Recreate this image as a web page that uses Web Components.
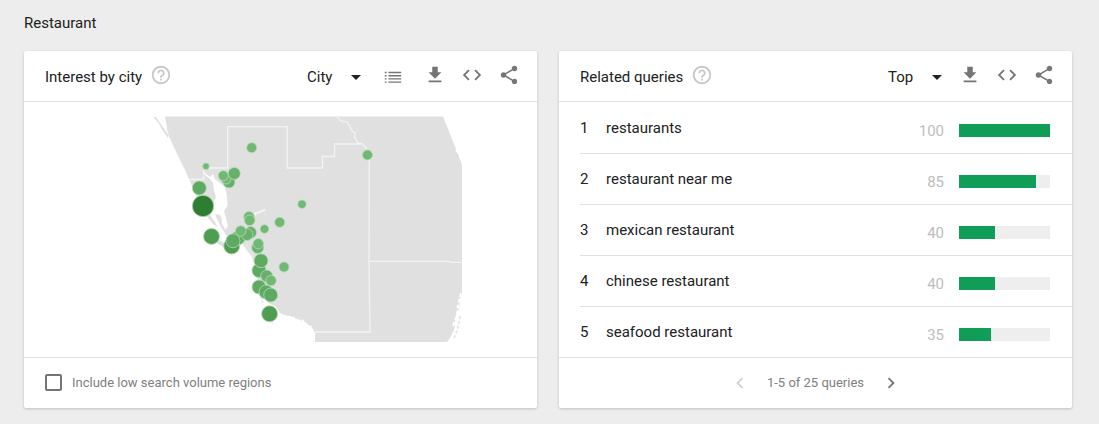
<!DOCTYPE html>
<html lang="en">
<head>
<meta charset="utf-8">
<meta name="viewport" content="width=device-width, initial-scale=1">
<title>Restaurant - Trends</title>
<style>
  body { margin: 0; background: #ededed; color: #212121; font: 15px/20px Roboto, "Liberation Sans", sans-serif; }
</style>
</head>
<body>
<trends-page></trends-page>

<template id="trends-page">
  <style>
    :host { display: block; padding: 13px 27px 16px 24px; }
    h1 { margin: 0 0 18px; font-size: 15px; line-height: 20px; font-weight: 400; }
    main { display: grid; grid-template-columns: 1fr 1fr; gap: 22px; }
    .check { display: flex; align-items: center; gap: 10px; padding: 0 0 1px 21px; }
    .check input { appearance: none; box-sizing: border-box; width: 17px; height: 17px; margin: 0; border: 2px solid #757575; border-radius: 2px; }
    .check input:checked { background: #757575; }
    .check label { color: #808080; font-size: 13px; }
    nav { display: flex; flex: 1; align-items: center; justify-content: center; gap: 16px; color: #808080; font-size: 13px; }
  </style>
  <h1>Restaurant</h1>
  <main>
    <trend-card heading="Interest by city">
      <drop-down slot="actions" label="Resolution" options="City,Metro"></drop-down>
      <icon-button slot="actions" icon="list" label="List view"></icon-button>
      <icon-button slot="actions" icon="download" label="Download"></icon-button>
      <icon-button slot="actions" icon="embed" label="Embed"></icon-button>
      <icon-button slot="actions" icon="share" label="Share"></icon-button>
      <city-map></city-map>
      <div slot="footer" class="check"><input type="checkbox" id="low"><label for="low">Include low search volume regions</label></div>
    </trend-card>
    <trend-card heading="Related queries">
      <drop-down slot="actions" label="Sort" options="Top,Rising"></drop-down>
      <icon-button slot="actions" icon="download" label="Download"></icon-button>
      <icon-button slot="actions" icon="embed" label="Embed"></icon-button>
      <icon-button slot="actions" icon="share" label="Share"></icon-button>
      <query-table></query-table>
      <nav slot="footer" aria-label="Pages">
        <icon-button icon="prev" label="Previous" disabled></icon-button>
        <span>1-5 of 25 queries</span>
        <icon-button icon="next" label="Next"></icon-button>
      </nav>
    </trend-card>
  </main>
</template>

<template id="trend-card">
  <style>
    :host { display: flex; flex-direction: column; min-width: 0; background: #fff; border-radius: 2px; box-shadow: 0 1px 3px rgba(0,0,0,.2); }
    header { display: flex; align-items: center; height: 48px; padding: 0 17px 2px 21px; border-bottom: 1px solid #e0e0e0; }
    h2 { margin: 4px 8px 0 0; font-size: 15px; line-height: 20px; font-weight: 400; }
    .actions { display: flex; align-items: center; gap: 15px; margin-left: auto; }
    .body { flex: 1; }
    footer { display: flex; height: 50px; border-top: 1px solid #e0e0e0; }
    ::slotted([slot=footer]) { flex: 1; }
  </style>
  <header><h2></h2><icon-button icon="help" label="Help"></icon-button><div class="actions"><slot name="actions"></slot></div></header>
  <div class="body"><slot></slot></div>
  <footer><slot name="footer"></slot></footer>
</template>

<template id="drop-down">
  <style>
    :host { display: grid; align-items: center; width: 54px; margin: 4px 2px 0 0; }
    select, svg { grid-area: 1 / 1; }
    select { appearance: none; width: 100%; margin: 0; padding: 0; border: 0; background: none; color: inherit; font: inherit; }
    svg { justify-self: end; width: 10px; height: 5px; pointer-events: none; }
  </style>
  <select></select>
  <svg viewBox="0 0 10 5" aria-hidden="true"><path d="M0 0h10L5 5z" fill="#212121"/></svg>
</template>

<template id="city-map">
  <style>
    :host { display: block; }
    svg { display: block; width: 100%; height: 255px; }
    .land { fill: #e0e0e0; }
    .water { fill: #fff; }
    .border { fill: none; stroke: #f3f3f3; stroke-width: 1.3; }
    circle { stroke: #b4dab5; stroke-width: .8; }
  </style>
  <svg viewBox="24 102 513 255" role="img" aria-label="Interest by city map">
    <path class="land" d="M165 116.5H443L456 149L455.500 151L458 154L462 165V293L460 299L459 308L456 316L454 330L450 338L447 342H315V333L311 327L305 322L297 319L289 316L281 314L275 306L268 303L262 294L258 281L255 267L252 257L246 249L242 243L233 248L225 248L215 242L219 240L226 244L225 236L219 228L213 224L208 218L204 211L199 202L194 191L189 179L184 168L179 158L171 141L168 134Z"/>
    <path class="land" d="M153.500 117L156 117L160 123L165 128L169 134L168 138L163 131L159 124Z"/>
    <path class="water" d="M164 117L166 123L167 131L170 136L166 132L161 124L157 117Z"/>
    <path class="water" d="M203 170L206 174L210 177L213 174L215 179L220 183L225 187L227 196L227.500 206L224 211L226 218L228 226L225 230L222 224L221 219L219 223L224 232L229 239L226 242L220 232L215 222L209 213L207 207L212 204L216 198L214 190L213 183L210 179L205 175Z"/>
    <path class="land" d="M215 214L220 215L222 219L221 223L225 229L222 229L218 221Z"/>
    <path class="border" d="M189 179.500H203.500V170M208 168H227.700V126.700H287.300V168H322.500V156.500H334.500V144H361M337 117L341 121L347 122L350 126L351 130L355 133L355 138L358 143L362 143.500L367 149M369.300 158L369 262L370 332H315M369 261.300H449L450 262.300H462"/>
    <path d="M250 218L256 213L260 212L265 209.500" fill="none" stroke="#fafafa" stroke-width="1.700"/>
    <path d="M280 314L287 318L292 317L297 321L303 321L306 326L311 327L313 332" fill="none" stroke="#fff" stroke-width="2.500" stroke-dasharray="2 1.500"/>
    <path d="M461 293L458 305L457 315L453 326" fill="none" stroke="#fff" stroke-width="2" stroke-dasharray="4 2"/>
    <path d="M454 338L457 331L459 322L460 316" fill="none" stroke="#e6e6e6" stroke-width="2" stroke-dasharray="3 2"/>
    <path d="M259 293L263 303M270 320L273 324M246 244L253 257" fill="none" stroke="#e6e6e6" stroke-width="1.500" stroke-dasharray="3 1"/>
    <g id="cities"></g>
  </svg>
</template>

<template id="query-table">
  <style>
    :host { display: block; }
    .wrap { padding: 1px 0 0 21px; }
    table { width: 100%; border-collapse: separate; border-spacing: 0; table-layout: fixed; }
    td { height: 50px; padding: 0; border-bottom: 1px solid #e0e0e0; }
    tr:last-child td { border-bottom: 0; }
    .rank { width: 26px; }
    .value { width: 60px; padding: 6px 15px 0 0; height: 44px; text-align: right; color: #bdbdbd; }
    .bar { width: 91px; padding: 5px 22px 0 0; height: 45px; }
    .track { height: 13px; background: #eee; }
    .fill { height: 100%; background: #0f9d58; }
  </style>
  <div class="wrap"><table aria-label="Related queries"><tbody></tbody></table></div>
</template>

<script>
class Base extends HTMLElement {
  constructor() {
    super();
    this.attachShadow({ mode: "open" });
    const t = document.getElementById(this.localName);
    if (t) this.shadowRoot.append(t.content.cloneNode(true));
  }
}

const ICONS = {
  help: '<path d="M11 18h2v-2h-2v2zm1-16C6.480 2 2 6.480 2 12s4.480 10 10 10 10-4.480 10-10S17.520 2 12 2zm0 18c-4.410 0-8-3.590-8-8s3.590-8 8-8 8 3.590 8 8-3.590 8-8 8zm0-14c-2.210 0-4 1.790-4 4h2c0-1.100.9-2 2-2s2 .9 2 2c0 2-3 1.750-3 5h2c0-2.250 3-2.500 3-5 0-2.210-1.790-4-4-4z"/>',
  list: '<path d="M3 8.500h2v1.500H3zM3 12h2v1.500H3zM3 15.500h2v1.500H3zM3 19h2v1.500H3zM7 8.500h14v1.500H7zM7 12h14v1.500H7zM7 15.500h14v1.500H7zM7 19h14v1.500H7z"/>',
  download: '<path d="M19 9h-4V3H9v6H5l7 7 7-7zM5 18v2h14v-2H5z"/>',
  embed: '<path d="M9.400 16.600L4.800 12l4.600-4.600L8 6l-6 6 6 6 1.400-1.400zm5.200 0l4.600-4.600-4.600-4.600L16 6l6 6-6 6-1.400-1.400z"/>',
  share: '<path d="M18 16.080c-.76 0-1.440.3-1.960.77L8.910 12.700c.05-.23.09-.46.09-.7s-.04-.47-.09-.7l7.050-4.110c.54.5 1.250.81 2.040.81 1.660 0 3-1.340 3-3s-1.340-3-3-3-3 1.340-3 3c0 .24.04.47.09.7L8.040 9.810C7.500 9.310 6.790 9 6 9c-1.660 0-3 1.340-3 3s1.340 3 3 3c.79 0 1.500-.31 2.040-.81l7.120 4.160c-.05.21-.08.43-.08.65 0 1.610 1.310 2.920 2.920 2.920s2.920-1.310 2.920-2.920-1.310-2.920-2.920-2.920z"/>',
  prev: '<path d="M15.410 7.410L14 6l-6 6 6 6 1.410-1.410L10.830 12z"/>',
  next: '<path d="M10 6L8.590 7.410 13.170 12l-4.580 4.590L10 18l6-6z"/>'
};

customElements.define("icon-button", class extends Base {
  connectedCallback() {
    const off = this.hasAttribute("disabled");
    this.shadowRoot.innerHTML = `<style>
      :host { display: block; color: #757575; }
      :host([icon=help]) { color: #c8c8c8; }
      :host([icon=list]) { margin: 0 5px 0 4px; }
      :host([disabled]) { color: #d0d0d0; }
      button { display: block; margin: 0; padding: 0; border: 0; background: none; color: inherit; }
      svg { display: block; width: 22px; height: 22px; fill: currentColor; }
    </style><button type="button" aria-label="${this.getAttribute("label")}"${off ? " disabled" : ""}><svg viewBox="0 0 24 24" aria-hidden="true">${ICONS[this.getAttribute("icon")]}</svg></button>`;
  }
});

customElements.define("drop-down", class extends Base {
  connectedCallback() {
    const select = this.shadowRoot.querySelector("select");
    select.setAttribute("aria-label", this.getAttribute("label"));
    select.innerHTML = this.getAttribute("options").split(",").map(o => `<option>${o}</option>`).join("");
  }
});

customElements.define("trend-card", class extends Base {
  connectedCallback() {
    this.shadowRoot.querySelector("h2").textContent = this.getAttribute("heading");
  }
});

// Each city: x, y, radius; larger means more interest, and darker.
const CITIES = [
  [251.7,147.7,5],[206,166.3,3.3],[229,182,6],[226,179,5],[223.3,175.7,5],[234.3,173.5,6],
  [199.3,188,7],[203,206,10.7],[302,204.3,4.2],[279.7,222.3,5],[249,216.7,5.3],[249.7,220.3,5.3],
  [264.5,229,4.3],[211.5,236.4,8],[231.7,246,8],[238,238,7],[250.5,232.5,6],[247,234.5,6],
  [240.7,231,5.3],[233,240.8,7],[257.7,247.5,6],[258.3,243.7,5.2],[259,270.5,7],[261,260.7,7],
  [266.7,276,6],[271,280.5,5.2],[284,267,5],[259,287,7],[266,292,7],[270.7,295,7],[269.6,313.8,8],[367.5,155,5]
];
customElements.define("city-map", class extends Base {
  connectedCallback() {
    const tone = r => r > 10 ? "#2e7d32" : r > 7.5 ? "#4f9d53" : r > 6.5 ? "#5faa63" : r > 5.5 ? "#68b06c" : "#71b875";
    this.shadowRoot.getElementById("cities").innerHTML =
      CITIES.map(([x, y, r]) => `<circle cx="${x}" cy="${y}" r="${r}" fill="${tone(r)}"/>`).join("");
  }
});

const QUERIES = [["restaurants",100],["restaurant near me",85],["mexican restaurant",40],["chinese restaurant",40],["seafood restaurant",35]];
customElements.define("query-table", class extends Base {
  connectedCallback() {
    this.shadowRoot.querySelector("tbody").innerHTML = QUERIES.map(([name, value], i) =>
      `<tr><td class="rank">${i + 1}</td><td class="name">${name}</td><td class="value">${value}</td><td class="bar"><div class="track"><div class="fill" style="width:${value}%"></div></div></td></tr>`).join("");
  }
});

customElements.define("trends-page", class extends Base {});
</script>
</body>
</html>
